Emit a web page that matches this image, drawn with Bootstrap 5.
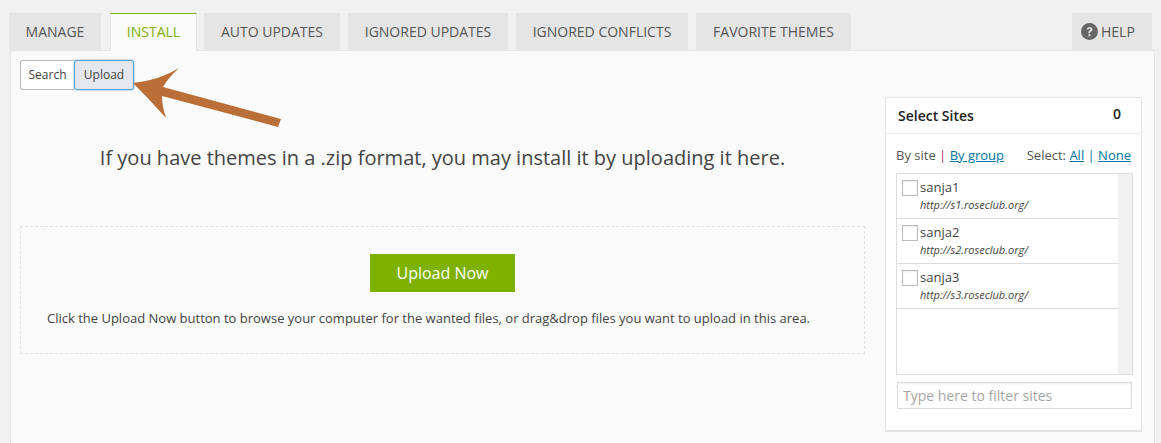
<!DOCTYPE html>
<html lang="en">
<head>
<meta charset="utf-8">
<title>Install themes</title>
<link href="https://cdn.jsdelivr.net/npm/bootstrap@5.3.0/dist/css/bootstrap.min.css" rel="stylesheet">
<style>
html,body{height:443px;overflow:hidden}
body{background:#f1f1f1;font-family:"Open Sans",sans-serif;font-size:13px;color:#444;position:relative}
.tabbar{height:50px;padding:13px 9px 0 9px;gap:8px;position:relative;z-index:1}
.tabbar .nav-link{height:37px;line-height:37px;padding:0;text-align:center;background:#e5e5e5;color:#555;font-size:14px;border-radius:0;border:0}
.tabbar .nav-link.active{background:#fafafa;color:#7fb100;border-top:1px solid #7fb100;border-left:1px solid #e5e5e5;border-right:1px solid #e5e5e5;line-height:36px;height:38px}
.t1{width:92px}.t2{width:87px;margin-left:1px;margin-right:-1px}.t3{width:136px}.t4{width:160px}.t5{width:172px}.t6{width:155px}
.tabbar .nav-link.t7{width:80px;text-align:left;padding-left:9px}
.help-ic{width:17px;height:17px;margin-right:3px;vertical-align:-3px}
.panel-box{margin-left:10px;width:1145px;height:400px;background:#fafafa;border:1px solid #e5e5e5;border-bottom:0;padding:9px 0 0 9px;gap:20px}
.left-col{width:845px}
.seg .btn{font-size:12px;line-height:16px;padding:5px 8px;height:30px;color:#444;border:1px solid #b4b9be;background:#fff;border-radius:3px 0 0 3px}
.seg .btn.on{background:#e4e7ee;border:1px solid #5b9dd9;border-radius:3px;box-shadow:0 0 2px rgba(30,140,190,.8);margin-left:0;width:60px;padding:5px 0;color:#444}
.seg .btn.first{width:54px;padding:5px 0;border-right:0}
.lead-line{font-size:20px;line-height:28px;margin:54px 0 0;text-align:center;color:#444}
.drop{margin-top:54px;height:128px;border:1px dashed #e2e2e2;padding-top:27px;text-align:center}
.go-btn{display:inline-block;width:145px;height:39px;line-height:38px;padding:0;background:#7fb100;border:0;border-bottom:1px solid #fff;color:#fff;font-size:16px;border-radius:0}
.drop p{margin:16px 0 0;padding-right:28px;line-height:18px;font-size:13px;color:#444}
.sites{width:257px;height:335px;margin-top:37px;background:#fff;border:1px solid #e5e5e5;border-bottom-width:2px}
.sites-head{height:36px;border-bottom:1px solid #eee;padding:0 20px 0 12px;font-weight:600;font-size:14px;color:#222}
.sites-head b{font-weight:600;font-size:14px;position:relative;top:-2px}
.sites-filter{padding:13px 10px 0;height:39px;font-size:13px;line-height:16px;white-space:nowrap;color:#555}
.sites-filter a{color:#0074a2}
.sep{color:#a35;margin:0}
.sep2{color:#0074a2;margin:0}
.sites-list{margin:0 8px 0 10px;height:202px;border:1px solid #ddd;border-bottom-width:1px;background:#fff}
.sb{width:14px;background:#f1f1f1}
.rows{flex:1}
.site-row{height:45px;border-bottom:1px solid #ddd;padding:5px 5px 0;position:relative}
.fake-check{width:16px;height:16px;border:1px solid #bbb;background:#fff;margin-top:1px;flex:none;margin-right:2px;box-shadow:inset 0 1px 2px rgba(0,0,0,.07)}
.site-name{font-size:13px;line-height:17px;color:#444}
.site-url{font-size:11px;font-style:italic;line-height:15px;margin-top:1px;color:#444}
.filter-in{display:block;margin:7px 0 0 11px;width:235px;height:27px;border:1px solid #ddd;border-radius:0;padding:0 5px;font-size:14px;font-family:inherit;box-shadow:inset 0 1px 2px rgba(0,0,0,.07);color:#444}
.filter-in::placeholder{color:#a5a5a5;opacity:1}
.arrow{position:absolute;left:0;top:0;z-index:5;pointer-events:none}
</style>
</head>
<body>
<ul class="nav tabbar d-flex flex-nowrap">
  <li class="nav-item"><a class="nav-link t1" href="#">MANAGE</a></li>
  <li class="nav-item"><a class="nav-link active t2" href="#">INSTALL</a></li>
  <li class="nav-item"><a class="nav-link t3" href="#">AUTO UPDATES</a></li>
  <li class="nav-item"><a class="nav-link t4" href="#">IGNORED UPDATES</a></li>
  <li class="nav-item"><a class="nav-link t5" href="#">IGNORED CONFLICTS</a></li>
  <li class="nav-item"><a class="nav-link t6" href="#">FAVORITE THEMES</a></li>
  <li class="nav-item ms-auto me-0"><a class="nav-link t7" href="#"><svg class="help-ic" viewBox="0 0 16 16"><circle cx="8" cy="8" r="8" fill="#666"/><path d="M5.4 6.2C5.5 4.7 6.6 3.8 8.1 3.8c1.5 0 2.6.9 2.6 2.2 0 1-.6 1.5-1.3 2-.6.4-.8.7-.8 1.3v.3H7V9c0-1 .4-1.5 1.1-2 .5-.4.8-.6.8-1 0-.5-.4-.8-.9-.8-.6 0-1 .4-1 1z" fill="#e5e5e5"/><rect x="7" y="10.6" width="1.8" height="1.8" fill="#e5e5e5"/></svg>HELP</a></li>
</ul>
<div class="panel-box d-flex align-items-start">
  <div class="left-col">
    <div class="seg d-flex">
      <button type="button" class="btn first">Search</button>
      <button type="button" class="btn on">Upload</button>
    </div>
    <p class="lead-line">If you have themes in a .zip format, you may install it by uploading it here.</p>
    <div class="drop">
      <a class="btn go-btn" href="#">Upload Now</a>
      <p>Click the Upload Now button to browse your computer for the wanted files, or drag&amp;drop files you want to upload in this area.</p>
    </div>
  </div>
  <aside class="sites">
    <div class="sites-head d-flex justify-content-between align-items-center"><span>Select Sites</span><b>0</b></div>
    <div class="sites-filter d-flex justify-content-between">
      <span>By site <span class="sep">|</span> <a href="#">By group</a></span>
      <span>Select: <a href="#">All</a> <span class="sep2">|</span> <a href="#">None</a></span>
    </div>
    <div class="sites-list d-flex">
      <div class="rows">
        <div class="site-row d-flex"><span class="fake-check"></span><div><div class="site-name">sanja1</div><div class="site-url">http://s1.roseclub.org/</div></div></div>
        <div class="site-row d-flex"><span class="fake-check"></span><div><div class="site-name">sanja2</div><div class="site-url">http://s2.roseclub.org/</div></div></div>
        <div class="site-row d-flex"><span class="fake-check"></span><div><div class="site-name">sanja3</div><div class="site-url">http://s3.roseclub.org/</div></div></div>
      </div>
      <div class="sb"></div>
    </div>
    <input class="filter-in" type="text" placeholder="Type here to filter sites">
  </aside>
</div>
<svg class="arrow" width="300" height="140" viewBox="0 0 300 140"><path d="M133 83Q160 80 179 68Q168 78 163 87L281 119L278 127L162 96Q162 106 166 118Q150 100 133 83Z" fill="#b96f37"/></svg>
<script src="https://cdn.jsdelivr.net/npm/bootstrap@5.3.0/dist/js/bootstrap.bundle.min.js"></script>
</body>
</html>
